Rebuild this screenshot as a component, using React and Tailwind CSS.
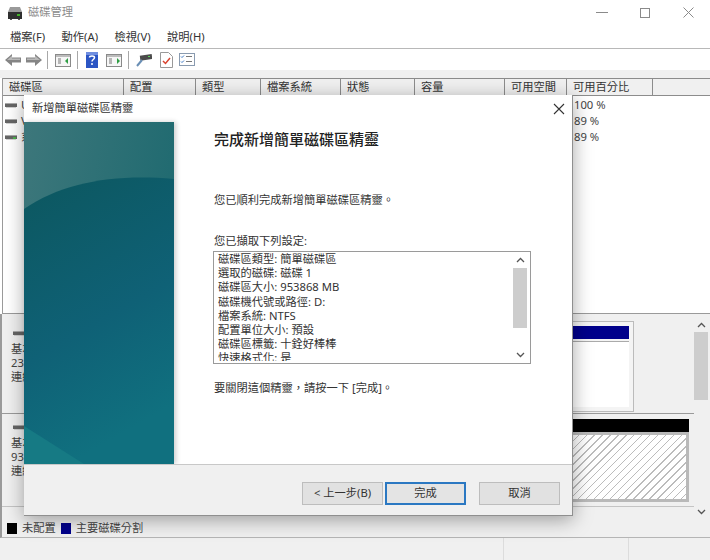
import React from 'react';

const FONT = { fontFamily: '"Noto Sans", "Noto Sans CJK TC", sans-serif' };

const columns = [
  ['磁碟區', 'w-[121px]'],
  ['配置', 'w-[72px]'],
  ['類型', 'w-[65px]'],
  ['檔案系統', 'w-[80px]'],
  ['狀態', 'w-[74px]'],
  ['容量', 'w-[90px]'],
  ['可用空間', 'w-[62px]'],
  ['可用百分比', 'w-[86px]'],
];

const rows = [
  { name: 'U', free: '100 %' },
  { name: 'V', free: '89 %' },
  { name: '系', free: '89 %', green: true },
];

const settings = [
  '磁碟區類型: 簡單磁碟區',
  '選取的磁碟: 磁碟 1',
  '磁碟區大小: 953868 MB',
  '磁碟機代號或路徑: D:',
  '檔案系統: NTFS',
  '配置單位大小: 預設',
  '磁碟區標籤: 十銓好棒棒',
  '快速格式化: 是',
];

const DiskIcon = ({ green }) => (
  <svg width="12" height="11" viewBox="0 0 12 11">
    <rect x="0" y="3" width="12" height="4" fill="#666" />
    <rect x="0" y="3" width="12" height="1" fill="#aaa" />
    <rect x="1" y="7" width="10" height="1" fill="#d0d0d0" />
    {green && <rect x="8" y="5" width="3" height="2" fill="#4cb04c" />}
  </svg>
);

const TitleIcon = () => (
  <svg width="16" height="16" viewBox="0 0 16 16">
    <path d="M3 2h10l2 5H1z" fill="#9a9a9a" />
    <rect x="1" y="7" width="14" height="7" fill="#2f2f2f" />
    <rect x="10" y="9" width="3" height="2" fill="#43b02a" />
    <rect x="3" y="14" width="2" height="1" fill="#555" />
    <rect x="11" y="14" width="2" height="1" fill="#555" />
  </svg>
);

const Arrow = ({ flip, className = '' }) => (
  <svg width="16" height="14" viewBox="0 0 16 14" className={`${flip ? '-scale-x-100' : ''} ${className}`}>
    <path d="M0 7l7-6v3.5h9v5H7V13z" fill="#858585" />
    <path d="M2 7l5-4.3v2.8h8v1.5z" fill="#b8b8b8" />
  </svg>
);

const Sep = ({ className = '' }) => <div className={`w-px h-[18px] bg-[#a8a8a8] ${className}`} />;

const PaneIcon = ({ right, className = '' }) => (
  <svg width="16" height="14" viewBox="0 0 16 14" className={className}>
    <rect x="0.5" y="1.5" width="15" height="12" fill="#f6f6f6" stroke="#8a8a8a" />
    <rect x="1" y="2" width="14" height="2" fill="#bcbcbc" />
    <path d="M3 6h3M3 8h3M3 10h3" stroke="#777" />
    <path d={right ? 'M11 5l3 3-3 3z' : 'M13 5l-3 3 3 3z'} fill="#2f9e44" />
  </svg>
);

const ToolIcons = () => (
  <div className="flex items-center h-[21px] shrink-0 pl-[5px]">
    <Arrow />
    <Arrow flip className="ml-[5px]" />
    <Sep className="ml-[5px]" />
    <PaneIcon className="ml-[7px]" />
    <Sep className="ml-[6px]" />
    <svg width="12" height="16" viewBox="0 0 12 16" className="ml-[8px]">
      <rect width="12" height="16" fill="#2b55c4" />
      <rect width="12" height="3" fill="#6f8ee0" />
      <path d="M3.5 5.5c0-2 5-2 5 0 0 2-2.5 2-2.5 4M6 11v2" stroke="#fff" strokeWidth="1.5" fill="none" />
    </svg>
    <PaneIcon right className="ml-[8px]" />
    <Sep className="ml-[6px]" />
    <svg width="16" height="15" viewBox="0 0 16 15" className="ml-[7px]">
      <rect x="4" y="3" width="12" height="5" fill="#4b4b4b" transform="rotate(-8 9 5)" />
      <rect x="12" y="4" width="2" height="1" fill="#5cd65c" />
      <path d="M1 14l5-6" stroke="#6a8fb5" strokeWidth="2" />
    </svg>
    <svg width="13" height="16" viewBox="0 0 13 16" className="ml-[8px]">
      <path d="M.5.5h8l4 4v11H.5z" fill="#fff" stroke="#999" />
      <path d="M3 9l2.5 2.5L10 6" stroke="#d9432f" strokeWidth="1.5" fill="none" />
    </svg>
    <svg width="16" height="13" viewBox="0 0 16 13" className="ml-[6px]">
      <rect x="0.5" y="0.5" width="15" height="12" fill="#fff" stroke="#8a9bb0" />
      <path d="M2 3.5l1 1 2-2M2 8.5l1 1 2-2" stroke="#3b78c4" fill="none" />
      <path d="M7 3.5h6M7 8.5h6" stroke="#777" />
    </svg>
  </div>
);

const DiskInfo = ({ size }) => (
  <div className="flex flex-col pl-[9px] pt-[8px] text-[11.25px] leading-[14px] text-[#444]">
    <div className="pl-[2px]">
      <DiskIcon />
    </div>
    <span className="mt-[3px]">基本</span>
    <span>{size}</span>
    <span>連線</span>
  </div>
);

const Btn = ({ children, focus, className = '' }) => (
  <div
    className={`h-[23px] w-[81px] flex items-center justify-center text-[11.25px] text-[#333] ${
      focus ? 'border-2 border-[#2b78c2] bg-[#e4e4e4]' : 'border border-[#bdbdbd] bg-[#e1e1e1]'
    } ${className}`}
  >
    {children}
  </div>
);

const Dialog = () => (
  <div className="absolute left-[24px] top-[95px] w-[549px] h-[421px] bg-white flex flex-col border-r border-b border-[#8f8f8f] shadow-[0_4px_18px_rgba(0,0,0,0.35)]">
    <div className="h-[27px] flex items-center justify-between pl-[8px] pr-[7px] shrink-0">
      <span className="text-[11.25px] text-[#333]">新增簡單磁碟區精靈</span>
      <svg width="12" height="12" viewBox="0 0 12 12">
        <path d="M1 1l10 10M11 1L1 11" stroke="#333" strokeWidth="1.1" />
      </svg>
    </div>
    <div className="flex flex-1 min-h-0">
      <div className="w-[150px] shrink-0 shadow-[2px_0_5px_rgba(0,0,0,0.2)]">
        <svg width="150" height="342" viewBox="0 0 150 342" className="block">
          <defs>
            <linearGradient id="wizardBack" x1="0" y1="0" x2="1" y2="0.35">
              <stop offset="0" stopColor="#3d777b" />
              <stop offset="1" stopColor="#1f6a70" />
            </linearGradient>
            <linearGradient id="wizardFront" x1="0" y1="0" x2="0.3" y2="1">
              <stop offset="0" stopColor="#0c575f" />
              <stop offset="0.6" stopColor="#0f6176" />
              <stop offset="1" stopColor="#10707f" />
            </linearGradient>
          </defs>
          <rect width="150" height="342" fill="url(#wizardBack)" />
          <path d="M0 87C40 60 90 52 150 57V342H0z" fill="url(#wizardFront)" />
          <path d="M0 304L60 342H0z" fill="#167a84" />
        </svg>
      </div>
      <div className="flex-1 flex flex-col pl-[39px] text-[#333]">
        <h1 className="mt-[7px] ml-px text-[15px] leading-[20px] font-medium text-[#222]">完成新增簡單磁碟區精靈</h1>
        <p className="mt-[43px] ml-px text-[11.25px] leading-[16px]">您已順利完成新增簡單磁碟區精靈。</p>
        <p className="mt-[25px] ml-px text-[11.25px] leading-[16px]">您已擷取下列設定:</p>
        <div className="mt-[2px] w-[318px] h-[113px] border border-[#9a9a9a] flex overflow-hidden">
          <div className="flex-1 pl-[4px] mb-[2px] overflow-hidden text-[11.25px] leading-[14.2px] text-[#333]">
            {settings.map(s => (
              <div key={s} className="whitespace-nowrap">{s}</div>
            ))}
          </div>
          <div className="w-[14px] mr-[3px] flex flex-col items-center shrink-0">
            <svg width="9" height="16" viewBox="0 0 9 16">
              <path d="M1 10l3.5-3.5L8 10" stroke="#555" strokeWidth="1.3" fill="none" />
            </svg>
            <div className="w-full h-[60px] bg-[#cdcdcd]" />
            <div className="flex-1" />
            <svg width="9" height="16" viewBox="0 0 9 16">
              <path d="M1 6l3.5 3.5L8 6" stroke="#555" strokeWidth="1.3" fill="none" />
            </svg>
          </div>
        </div>
        <p className="mt-[16px] ml-px text-[11.25px] leading-[16px]">{'要關閉這個精靈\uFF0C請按一下 [完成]。'}</p>
      </div>
    </div>
    <div className="h-[51px] shrink-0 bg-[#f0f0f0] border-t border-[#c8c8c8] flex items-start pl-[278px] pt-[17px]">
      <Btn>&lt; 上一步(B)</Btn>
      <Btn focus className="ml-[2px]">完成</Btn>
      <Btn className="ml-[13px]">取消</Btn>
    </div>
  </div>
);

export default function App() {
  return (
    <div style={FONT} className="relative w-[710px] h-[560px] overflow-hidden bg-white flex flex-col text-[#333]">
      {/* title bar */}
      <div className="h-[25px] shrink-0 flex items-center pl-[7px] pr-[16px]">
        <TitleIcon />
        <span className="ml-[5px] text-[11.25px] text-[#8c8c8c]">磁碟管理</span>
        <div className="ml-auto flex items-center">
          <div className="w-[12px] h-px bg-[#8a8a8a]" />
          <div className="ml-[32px] w-[10px] h-[10px] border border-[#8a8a8a]" />
          <svg width="11" height="11" viewBox="0 0 11 11" className="ml-[33px]">
            <path d="M.5.5l10 10M10.5.5l-10 10" stroke="#8a8a8a" />
          </svg>
        </div>
      </div>
      {/* menu */}
      <div className="h-[24px] shrink-0 flex items-center gap-[16.5px] pl-[10px] pt-px text-[11.25px] text-[#333] border-b border-[#b8b8b8]">
        <span>檔案(F)</span>
        <span>動作(A)</span>
        <span>檢視(V)</span>
        <span>說明(H)</span>
      </div>
      <ToolIcons />
      <div className="h-[8px] shrink-0 bg-[#f0f0f0]" />
      {/* volume list */}
      <div className="shrink-0 ml-[2px] h-[236px] flex flex-col bg-white border-l border-[#9a9a9a]">
        <div className="h-[18px] shrink-0 flex bg-[#f0f0f0] border-t border-b border-[#8c8c8c] text-[11.25px] leading-[16px] text-[#333]">
          {columns.map(([label, w]) => (
            <div key={label} className={`${w} pl-[6px] border-r border-[#8c8c8c] whitespace-nowrap`}>{label}</div>
          ))}
        </div>
        <div className="flex-1 pt-px text-[11.25px] leading-[16px] text-[#444] border-b border-[#9a9a9a]">
          {rows.map(r => (
            <div key={r.free + r.name} className="flex items-center h-[16px]">
              <div className="w-[571px] flex items-center pl-[2px] gap-[4px]">
                <DiskIcon green={r.green} />
                <span>{r.name}</span>
              </div>
              <span>{r.free}</span>
            </div>
          ))}
        </div>
      </div>
      {/* graph pane */}
      <div className="h-[205px] shrink-0 flex bg-[#f0f0f0] border-l-2 border-[#9a9a9a]">
        <div className="flex-1 flex flex-col pt-[6px]">
          <div className="h-[94px] flex border-b border-[#9a9a9a]">
            <DiskInfo size="23" />
            <div className="ml-auto mt-px mb-px mr-[60px] w-[120px] border border-[#bbb] p-[4px] flex flex-col bg-[#f4f4f4]">
              <div className="h-[13px] bg-[#00008b]" />
              <div className="flex-1 mt-[2px] bg-white border-t border-[#aaa]" />
            </div>
          </div>
          <div className="h-[93px] flex border-b border-[#c4c4c4]">
            <DiskInfo size="93" />
            <div className="ml-auto mt-[5px] mb-[4px] mr-[5px] w-[160px] flex flex-col">
              <div className="h-[13px] bg-black" />
              <div className="flex-1 border-[3px] border-[#b9b9b9] bg-white bg-[repeating-linear-gradient(135deg,#ffffff_0px,#ffffff_4.6px,#bcbcbc_4.6px,#bcbcbc_5.6px)]" />
            </div>
          </div>
        </div>
        <div className="w-[14px] mr-[2px] flex flex-col items-center shrink-0">
          <svg width="9" height="18" viewBox="0 0 9 18">
            <path d="M1 13l3.5-3.5L8 13" stroke="#555" strokeWidth="1.3" fill="none" />
          </svg>
          <div className="w-full h-[68px] bg-[#cdcdcd]" />
          <div className="flex-1" />
          <svg width="9" height="14" viewBox="0 0 9 14">
            <path d="M1 5l3.5 3.5L8 5" stroke="#555" strokeWidth="1.3" fill="none" />
          </svg>
        </div>
      </div>
      {/* legend */}
      <div className="h-[19px] shrink-0 bg-[#f0f0f0] flex items-center pl-[5px] text-[11.25px] text-[#444] border-b border-[#b5b5b5] border-l-2 border-l-[#9a9a9a]">
        <span className="w-[10px] h-[11px] bg-black" />
        <span className="ml-[5px]">未配置</span>
        <span className="ml-[5px] w-[10px] h-[11px] bg-[#00008b]" />
        <span className="ml-[5px]">主要磁碟分割</span>
      </div>
      {/* status bar */}
      <div className="flex-1 bg-[#f0f0f0] flex justify-end">
        <div className="w-[125px] border-l border-[#dcdcdc]" />
        <div className="w-[82px] border-l border-[#dcdcdc]" />
      </div>
      <Dialog />
    </div>
  );
}
